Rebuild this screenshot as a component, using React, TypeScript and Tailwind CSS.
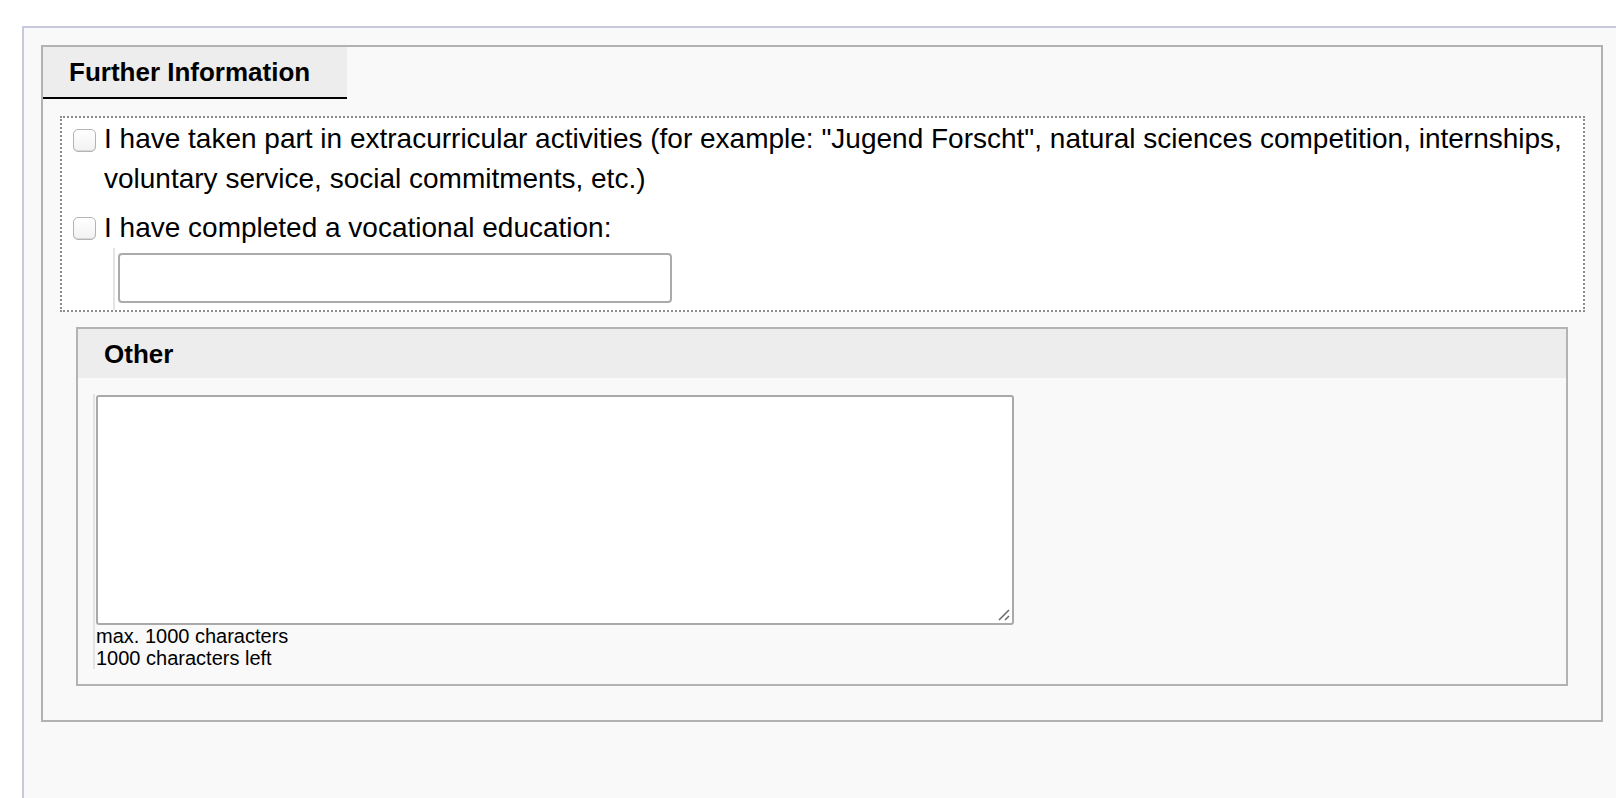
import React from "react";

function Checkbox() {
  return (
    <span className="block w-[23px] h-[23px] shrink-0 rounded-[5px] border-[1.5px] border-[#b4b4b4] bg-gradient-to-b from-white to-[#f2f2f2] shadow-[inset_0_-1px_0_#d8d8d8]" />
  );
}

export default function App() {
  return (
    <div className="h-[798px] bg-white pt-[26px] pl-[22px] flex flex-col font-['Liberation_Sans',Arial,sans-serif] text-black">
      <div className="flex-1 border-l-2 border-t-2 border-[#c9c9dd] bg-[#f9f9f9] pt-[17px] pl-[17px]">
        <div className="w-[1562px] h-[677px] border-2 border-[#b2b2b2] flex flex-col">
          <div className="w-[304px] h-[52px] bg-[#ededed] border-b-2 border-black flex items-center pl-[26px]">
            <span className="text-[26px] font-bold leading-none">Further Information</span>
          </div>
          <div className="mt-[17px] ml-[17px] mr-[16px] border-2 border-dotted border-[#8c8c8c] bg-white pt-px pl-[11px]">
            <div className="flex items-start gap-[8px]">
              <div className="pt-[10px]"><Checkbox /></div>
              <p className="text-[28px] leading-[40px] pr-[10px]">
                I have taken part in extracurricular activities (for example: "Jugend Forscht", natural sciences competition, internships, voluntary service, social commitments, etc.)
              </p>
            </div>
            <div className="flex items-start gap-[8px] mt-[9px]">
              <div className="pt-[9px]"><Checkbox /></div>
              <p className="text-[28px] leading-[40px]">I have completed a vocational education:</p>
            </div>
            <div className="ml-[40px] border-l-2 border-[#e4e4e4] pl-[3px] pt-[5px] pb-[7px]">
              <input
                type="text"
                className="block w-[554px] h-[50px] rounded-[4px] border-2 border-[#ababab] bg-white outline-none"
              />
            </div>
          </div>
          <div className="mt-[15px] mx-[33px] border-2 border-[#b3b3b3]">
            <div className="h-[49px] bg-[#ededed] flex items-center pl-[26px]">
              <span className="text-[26px] font-bold leading-none">Other</span>
            </div>
            <div className="pt-[16px] pb-[15px] pl-[15px]">
              <div className="border-l-2 border-[#e4e4e4] pl-px pt-px">
                <div className="relative w-[918px]">
                  <textarea className="block w-[918px] h-[230px] rounded-[3px] border-2 border-[#a9a9a9] bg-white outline-none resize-none" />
                  <svg className="absolute right-[3px] bottom-[3px]" width="14" height="14" viewBox="0 0 14 14">
                    <line x1="2" y1="12" x2="12" y2="2" stroke="#6b6b6b" strokeWidth="1.6" />
                    <line x1="8" y1="12" x2="12" y2="8" stroke="#6b6b6b" strokeWidth="1.6" />
                  </svg>
                </div>
                <div className="text-[20px] leading-[22px]">
                  <div>max. 1000 characters</div>
                  <div>1000 characters left</div>
                </div>
              </div>
            </div>
          </div>
        </div>
      </div>
    </div>
  );
}
